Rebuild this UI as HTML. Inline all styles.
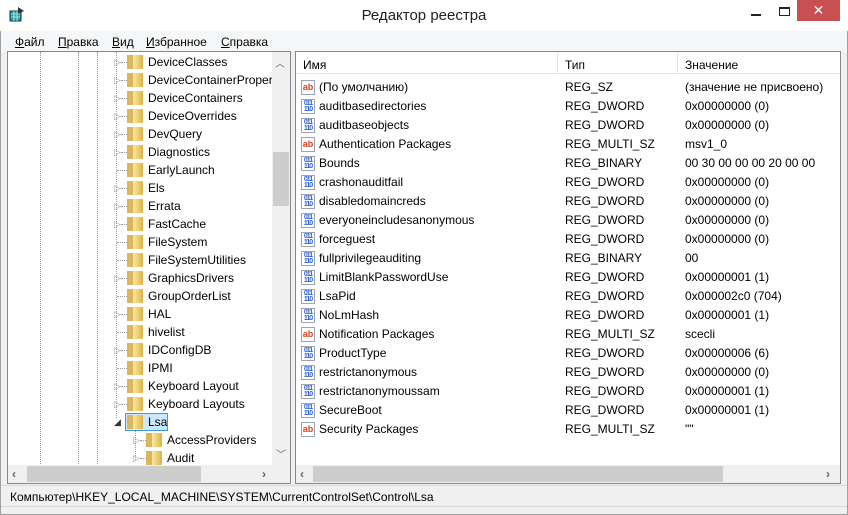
<!DOCTYPE html>
<html><head><meta charset="utf-8"><style>
*{margin:0;padding:0;box-sizing:border-box}
body{width:848px;height:515px;overflow:hidden;background:#f0f0f0;font-family:"Liberation Sans","DejaVu Sans",sans-serif;font-size:12px;color:#000;position:relative}
.a{position:absolute}
.win{left:0;top:0;width:848px;height:515px;border:1px solid #a0a0a0;background:#f0f0f0}
.title{left:0;top:0;width:848px;height:31px;background:#fff}
.menu{left:1px;top:31px;width:846px;height:20px;background:#f5f6f7}
.menu span{position:absolute;top:4px;font-size:12px}
.pane{background:#fff;border:1px solid #828790}
.tr{position:absolute;height:18px;line-height:18px;white-space:nowrap}
.fold{position:absolute;width:16px;height:14px;top:2px;background:linear-gradient(90deg,#e8c96a,#f7e6a8 40%,#eccf70 70%,#d6b24a);border-radius:1px}
.fold:before{content:"";position:absolute;left:0;top:0;width:6px;height:14px;background:#dcb65a}
.exp{position:absolute;top:0;font-size:9px;color:#a0a0a0}
.dots{position:absolute;border-left:1px dotted #999;width:0}
.hd{position:absolute;height:12px;border-top:1px dotted #999}
.r{position:absolute;left:0;height:19px;line-height:19px;white-space:nowrap;width:540px}
.ic{position:absolute;left:5px;top:2px;width:14px;height:15px;border:1px solid #9aa4b8;background:#fff;font-size:9px;line-height:12px;text-align:center;font-weight:bold}
.ab{color:#d2421c}
.bin{color:#2b5fd0;font-size:7px;line-height:6px;letter-spacing:-1px;padding-top:1px}
.c1{position:absolute;left:23px}.c2{position:absolute;left:269px}.c3{position:absolute;left:389px}
.sb{background:#f0f0f0}
.th{background:#cdcdcd}
</style></head><body>
<div class="a win"></div>
<div class="a title"></div>
<div class="a" style="left:8px;top:6px;width:18px;height:17px;">
<svg width="18" height="17"><rect x="2" y="5" width="11" height="10" fill="#2a9a9a" stroke="#134" stroke-width="1"/><path d="M3 8h9M3 11h9M6 5v10M9 5v10" stroke="#9ee" stroke-width="1"/><path d="M10 1l6 4-6 3z" fill="#333"/></svg></div>
<div class="a" style="left:0;top:7px;width:848px;text-align:center;font-size:15px;color:#222">Редактор реестра</div>
<div class="a" style="left:751px;top:14px;width:10px;height:2px;background:#222"></div>
<div class="a" style="left:779px;top:7px;width:11px;height:9px;border:1px solid #222;border-top-width:2px"></div>
<div class="a" style="left:797px;top:0;width:43px;height:21px;background:#c75050;color:#fff;text-align:center;font-size:14px;line-height:21px">✕</div>
<div class="a menu">
<span style="left:14px"><u>Ф</u>айл</span><span style="left:57px"><u>П</u>равка</span><span style="left:111px"><u>В</u>ид</span><span style="left:145px"><u>И</u>збранное</span><span style="left:220px"><u>С</u>правка</span>
</div>

<!-- left pane -->
<div class="a pane" style="left:7px;top:51px;width:284px;height:433px;overflow:hidden">
<div class="dots" style="left:32px;top:0;height:414px"></div>
<div class="dots" style="left:70px;top:0;height:414px"></div>
<div class="dots" style="left:89px;top:0;height:414px"></div>
<div class="dots" style="left:108px;top:0;height:366px"></div>
<div class="dots" style="left:127px;top:378px;height:30px"></div>
</div>
<div class="a" style="left:8px;top:53px;width:264px;height:412px;overflow:hidden">
<div class="tr" style="top:0"><span class="exp" style="left:106px">▷</span><span class="hd" style="left:113px;top:9px;width:6px"></span><span class="fold" style="left:119px"></span><span style="position:absolute;left:140px">DeviceClasses</span></div>
<div class="tr" style="top:18px"><span class="exp" style="left:106px">▷</span><span class="hd" style="left:113px;top:9px;width:6px"></span><span class="fold" style="left:119px"></span><span style="position:absolute;left:140px">DeviceContainerPropert</span></div>
<div class="tr" style="top:36px"><span class="exp" style="left:106px">▷</span><span class="hd" style="left:113px;top:9px;width:6px"></span><span class="fold" style="left:119px"></span><span style="position:absolute;left:140px">DeviceContainers</span></div>
<div class="tr" style="top:54px"><span class="exp" style="left:106px">▷</span><span class="hd" style="left:113px;top:9px;width:6px"></span><span class="fold" style="left:119px"></span><span style="position:absolute;left:140px">DeviceOverrides</span></div>
<div class="tr" style="top:72px"><span class="exp" style="left:106px">▷</span><span class="hd" style="left:113px;top:9px;width:6px"></span><span class="fold" style="left:119px"></span><span style="position:absolute;left:140px">DevQuery</span></div>
<div class="tr" style="top:90px"><span class="exp" style="left:106px">▷</span><span class="hd" style="left:113px;top:9px;width:6px"></span><span class="fold" style="left:119px"></span><span style="position:absolute;left:140px">Diagnostics</span></div>
<div class="tr" style="top:108px"><span class="hd" style="left:109px;top:9px;width:10px"></span><span class="fold" style="left:119px"></span><span style="position:absolute;left:140px">EarlyLaunch</span></div>
<div class="tr" style="top:126px"><span class="exp" style="left:106px">▷</span><span class="hd" style="left:113px;top:9px;width:6px"></span><span class="fold" style="left:119px"></span><span style="position:absolute;left:140px">Els</span></div>
<div class="tr" style="top:144px"><span class="exp" style="left:106px">▷</span><span class="hd" style="left:113px;top:9px;width:6px"></span><span class="fold" style="left:119px"></span><span style="position:absolute;left:140px">Errata</span></div>
<div class="tr" style="top:162px"><span class="exp" style="left:106px">▷</span><span class="hd" style="left:113px;top:9px;width:6px"></span><span class="fold" style="left:119px"></span><span style="position:absolute;left:140px">FastCache</span></div>
<div class="tr" style="top:180px"><span class="hd" style="left:109px;top:9px;width:10px"></span><span class="fold" style="left:119px"></span><span style="position:absolute;left:140px">FileSystem</span></div>
<div class="tr" style="top:198px"><span class="hd" style="left:109px;top:9px;width:10px"></span><span class="fold" style="left:119px"></span><span style="position:absolute;left:140px">FileSystemUtilities</span></div>
<div class="tr" style="top:216px"><span class="exp" style="left:106px">▷</span><span class="hd" style="left:113px;top:9px;width:6px"></span><span class="fold" style="left:119px"></span><span style="position:absolute;left:140px">GraphicsDrivers</span></div>
<div class="tr" style="top:234px"><span class="hd" style="left:109px;top:9px;width:10px"></span><span class="fold" style="left:119px"></span><span style="position:absolute;left:140px">GroupOrderList</span></div>
<div class="tr" style="top:252px"><span class="exp" style="left:106px">▷</span><span class="hd" style="left:113px;top:9px;width:6px"></span><span class="fold" style="left:119px"></span><span style="position:absolute;left:140px">HAL</span></div>
<div class="tr" style="top:270px"><span class="hd" style="left:109px;top:9px;width:10px"></span><span class="fold" style="left:119px"></span><span style="position:absolute;left:140px">hivelist</span></div>
<div class="tr" style="top:288px"><span class="exp" style="left:106px">▷</span><span class="hd" style="left:113px;top:9px;width:6px"></span><span class="fold" style="left:119px"></span><span style="position:absolute;left:140px">IDConfigDB</span></div>
<div class="tr" style="top:306px"><span class="hd" style="left:109px;top:9px;width:10px"></span><span class="fold" style="left:119px"></span><span style="position:absolute;left:140px">IPMI</span></div>
<div class="tr" style="top:324px"><span class="exp" style="left:106px">▷</span><span class="hd" style="left:113px;top:9px;width:6px"></span><span class="fold" style="left:119px"></span><span style="position:absolute;left:140px">Keyboard Layout</span></div>
<div class="tr" style="top:342px"><span class="exp" style="left:106px">▷</span><span class="hd" style="left:113px;top:9px;width:6px"></span><span class="fold" style="left:119px"></span><span style="position:absolute;left:140px">Keyboard Layouts</span></div>
<div class="tr" style="top:360px"><span class="exp" style="left:106px;color:#333">◢</span><span style="position:absolute;left:117px;top:0;width:43px;height:18px;background:#cce8ff;border:1px solid #3d9be0"></span><span class="fold" style="left:119px"></span><span style="position:absolute;left:140px">Lsa</span></div>
<div class="tr" style="top:378px"><span class="exp" style="left:125px">▷</span><span class="hd" style="left:132px;top:9px;width:6px"></span><span class="fold" style="left:138px"></span><span style="position:absolute;left:159px">AccessProviders</span></div>
<div class="tr" style="top:396px"><span class="exp" style="left:125px">▷</span><span class="hd" style="left:132px;top:9px;width:6px"></span><span class="fold" style="left:138px"></span><span style="position:absolute;left:159px">Audit</span></div>
</div>
<div class="a sb" style="left:272px;top:52px;width:18px;height:413px"></div>
<div class="a th" style="left:273px;top:152px;width:16px;height:54px"></div>
<div class="a" style="left:275px;top:55px;color:#606060;font-size:10px">︿</div>
<div class="a" style="left:276px;top:446px;color:#606060;font-size:10px">﹀</div>
<div class="a sb" style="left:8px;top:465px;width:282px;height:18px"></div>
<div class="a th" style="left:27px;top:466px;width:174px;height:16px"></div>
<div class="a" style="left:12px;top:467px;color:#606060;font-size:12px;font-weight:bold">‹</div>
<div class="a" style="left:262px;top:467px;color:#606060;font-size:12px;font-weight:bold">›</div>

<!-- right pane -->
<div class="a pane" style="left:295px;top:51px;width:546px;height:433px"></div>
<div class="a" style="left:296px;top:52px;width:544px;height:22px;background:#fff;border-bottom:1px solid #e5e5e5">
<span class="a" style="left:7px;top:6px">Имя</span>
<span class="a" style="left:261px;top:0;width:1px;height:21px;background:#e5e5e5"></span>
<span class="a" style="left:269px;top:6px">Тип</span>
<span class="a" style="left:381px;top:0;width:1px;height:21px;background:#e5e5e5"></span>
<span class="a" style="left:389px;top:6px">Значение</span>
</div>
<div class="a" style="left:296px;top:78px;width:544px;height:387px;overflow:hidden">
<div class="r" style="top:0"><span class="ic ab">ab</span><span class="c1">(По умолчанию)</span><span class="c2">REG_SZ</span><span class="c3">(значение не присвоено)</span></div>
<div class="r" style="top:19px"><span class="ic bin">011<br>110</span><span class="c1">auditbasedirectories</span><span class="c2">REG_DWORD</span><span class="c3">0x00000000 (0)</span></div>
<div class="r" style="top:38px"><span class="ic bin">011<br>110</span><span class="c1">auditbaseobjects</span><span class="c2">REG_DWORD</span><span class="c3">0x00000000 (0)</span></div>
<div class="r" style="top:57px"><span class="ic ab">ab</span><span class="c1">Authentication Packages</span><span class="c2">REG_MULTI_SZ</span><span class="c3">msv1_0</span></div>
<div class="r" style="top:76px"><span class="ic bin">011<br>110</span><span class="c1">Bounds</span><span class="c2">REG_BINARY</span><span class="c3">00 30 00 00 00 20 00 00</span></div>
<div class="r" style="top:95px"><span class="ic bin">011<br>110</span><span class="c1">crashonauditfail</span><span class="c2">REG_DWORD</span><span class="c3">0x00000000 (0)</span></div>
<div class="r" style="top:114px"><span class="ic bin">011<br>110</span><span class="c1">disabledomaincreds</span><span class="c2">REG_DWORD</span><span class="c3">0x00000000 (0)</span></div>
<div class="r" style="top:133px"><span class="ic bin">011<br>110</span><span class="c1">everyoneincludesanonymous</span><span class="c2">REG_DWORD</span><span class="c3">0x00000000 (0)</span></div>
<div class="r" style="top:152px"><span class="ic bin">011<br>110</span><span class="c1">forceguest</span><span class="c2">REG_DWORD</span><span class="c3">0x00000000 (0)</span></div>
<div class="r" style="top:171px"><span class="ic bin">011<br>110</span><span class="c1">fullprivilegeauditing</span><span class="c2">REG_BINARY</span><span class="c3">00</span></div>
<div class="r" style="top:190px"><span class="ic bin">011<br>110</span><span class="c1">LimitBlankPasswordUse</span><span class="c2">REG_DWORD</span><span class="c3">0x00000001 (1)</span></div>
<div class="r" style="top:209px"><span class="ic bin">011<br>110</span><span class="c1">LsaPid</span><span class="c2">REG_DWORD</span><span class="c3">0x000002c0 (704)</span></div>
<div class="r" style="top:228px"><span class="ic bin">011<br>110</span><span class="c1">NoLmHash</span><span class="c2">REG_DWORD</span><span class="c3">0x00000001 (1)</span></div>
<div class="r" style="top:247px"><span class="ic ab">ab</span><span class="c1">Notification Packages</span><span class="c2">REG_MULTI_SZ</span><span class="c3">scecli</span></div>
<div class="r" style="top:266px"><span class="ic bin">011<br>110</span><span class="c1">ProductType</span><span class="c2">REG_DWORD</span><span class="c3">0x00000006 (6)</span></div>
<div class="r" style="top:285px"><span class="ic bin">011<br>110</span><span class="c1">restrictanonymous</span><span class="c2">REG_DWORD</span><span class="c3">0x00000000 (0)</span></div>
<div class="r" style="top:304px"><span class="ic bin">011<br>110</span><span class="c1">restrictanonymoussam</span><span class="c2">REG_DWORD</span><span class="c3">0x00000001 (1)</span></div>
<div class="r" style="top:323px"><span class="ic bin">011<br>110</span><span class="c1">SecureBoot</span><span class="c2">REG_DWORD</span><span class="c3">0x00000001 (1)</span></div>
<div class="r" style="top:342px"><span class="ic ab">ab</span><span class="c1">Security Packages</span><span class="c2">REG_MULTI_SZ</span><span class="c3">""</span></div>
</div>
<div class="a sb" style="left:296px;top:465px;width:544px;height:18px"></div>
<div class="a th" style="left:313px;top:466px;width:410px;height:16px"></div>
<div class="a" style="left:300px;top:467px;color:#606060;font-size:12px;font-weight:bold">‹</div>
<div class="a" style="left:826px;top:467px;color:#606060;font-size:12px;font-weight:bold">›</div>

<!-- status -->
<div class="a" style="left:1px;top:485px;width:846px;height:1px;background:#d9d9d9"></div>
<div class="a" style="left:10px;top:490px;font-size:12px">Компьютер\HKEY_LOCAL_MACHINE\SYSTEM\CurrentControlSet\Control\Lsa</div>
<div class="a" style="left:1px;top:506px;width:846px;height:1px;background:#d9d9d9"></div>
</body></html>
